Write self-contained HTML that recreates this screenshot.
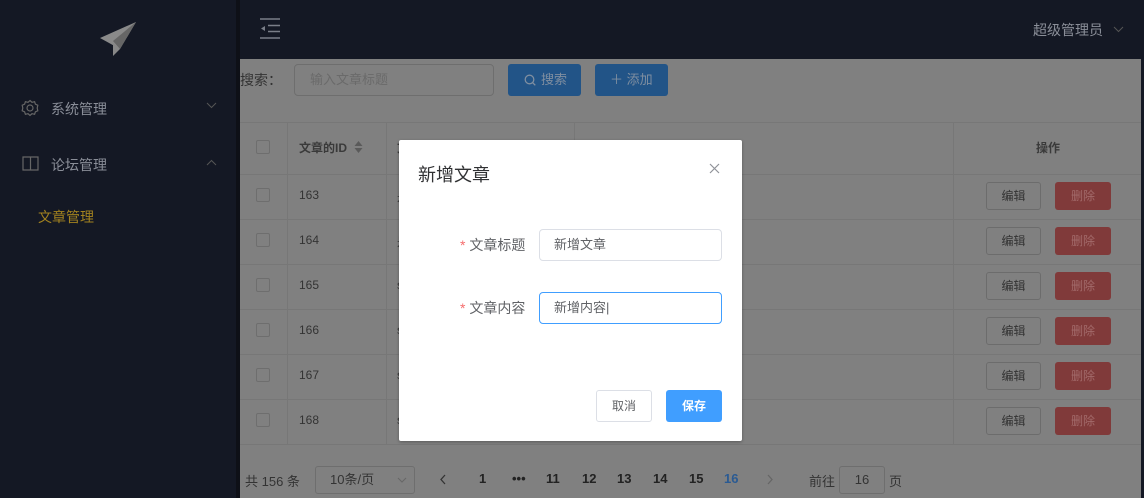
<!DOCTYPE html>
<html><head><meta charset="utf-8"><style>
*{margin:0;padding:0;box-sizing:border-box}
body{width:1144px;height:498px;overflow:hidden;background:#808080;font-family:"Liberation Sans","Noto Sans CJK SC",sans-serif;font-size:13px;position:relative}
.a{position:absolute}
.side{left:0;top:0;width:240px;height:498px;background:#141824;border-right:4px solid #0e1017}
.hdr{left:240px;top:0;width:904px;height:59px;background:#141824}
.t{position:absolute;white-space:nowrap}
.hl{background:#777;position:absolute}
.cb{position:absolute;width:14px;height:14px;border:1px solid #6e6e6e;border-radius:2px;left:256px}
.ed{position:absolute;left:986px;width:55px;height:28px;border:1px solid #6c6c6c;border-radius:3px;color:#333;text-align:center;line-height:26px;font-size:12px}
.de{position:absolute;left:1055px;width:56px;height:28px;background:#803a3a;border-radius:3px;color:#a26a6a;text-align:center;line-height:28px;font-size:12px}
.dlg{left:399px;top:140px;width:343px;height:301px;background:#fff;border-radius:2px;box-shadow:0 1px 3px rgba(0,0,0,.3)}
.inp{position:absolute;border:1px solid #dcdfe6;border-radius:4px;height:32px;width:183px;left:140px;padding-left:14px;line-height:30px;color:#606266;font-size:13px}
.pg{position:absolute;top:471px;font-size:13px;font-weight:bold;color:#222}
</style></head><body>
<div class="a side">
<svg class="a" style="left:98px;top:21px" width="40" height="36" viewBox="0 0 40 36"><polygon points="2,17 38,1 22,28" fill="#8a8a8a"/><polygon points="38,1 22,28 15,20" fill="#666"/><polygon points="15,22 22,28 15,35" fill="#888"/></svg>
<svg class="a" style="left:21px;top:99px" width="18" height="18" viewBox="0 0 18 18"><circle cx="9" cy="9" r="3" fill="none" stroke="#666" stroke-width="1.2"/><path d="M9 1.5l2 1.8 2.6-.6.8 2.5 2.4 1-.6 2.8.6 2.8-2.4 1-.8 2.5-2.6-.6-2 1.8-2-1.8-2.6.6-.8-2.5-2.4-1 .6-2.8-.6-2.8 2.4-1 .8-2.5 2.6.6z" fill="none" stroke="#666" stroke-width="1.2"/></svg>
<div class="t" style="left:51px;top:99px;color:#8a8e98;font-size:14px">系统管理</div>
<svg class="a" style="left:206px;top:102px" width="11" height="7"><path d="M1 1l4.5 4.5L10 1" fill="none" stroke="#555" stroke-width="1"/></svg>
<svg class="a" style="left:22px;top:156px" width="17" height="15"><path d="M1 1h15v13H1zM8.5 1v13" fill="none" stroke="#666" stroke-width="1.2"/></svg>
<div class="t" style="left:51px;top:155px;color:#8a8e98;font-size:14px">论坛管理</div>
<svg class="a" style="left:206px;top:159px" width="11" height="7"><path d="M1 6l4.5-4.5L10 6" fill="none" stroke="#555" stroke-width="1"/></svg>
<div class="t" style="left:38px;top:207px;color:#a2821f;font-size:14px">文章管理</div>
</div>
<div class="a hdr">
<svg class="a" style="left:20px;top:18px" width="20" height="21"><path d="M0 1h20M8 7.5h12M8 13.5h12M0 20h20" stroke="#7a7e88" stroke-width="1.5"/><polygon points="1,10.5 5,8 5,13" fill="#7a7e88"/></svg>
<div class="t" style="left:793px;top:20px;color:#8a8e98;font-size:14px">超级管理员</div>
<svg class="a" style="left:873px;top:26px" width="11" height="7"><path d="M1 1l4.5 4.5L10 1" fill="none" stroke="#555" stroke-width="1"/></svg>
</div>
<div class="t" style="left:240px;top:70px;color:#333;font-size:14px">搜索：</div>
<div class="a" style="left:294px;top:64px;width:200px;height:32px;border:1px solid #6e6e6e;border-radius:4px;color:#6a6a6a;line-height:30px;padding-left:15px">输入文章标题</div>
<div class="a" style="left:508px;top:64px;width:73px;height:32px;background:#225487;border-radius:3px;color:#7f8ea0;line-height:32px;padding-left:33px">搜索</div>
<svg class="a" style="left:524px;top:74px" width="12" height="12"><circle cx="5.5" cy="5.5" r="4.3" fill="none" stroke="#7f8ea0" stroke-width="1.3"/><path d="M8.5 8.5l2.8 2.8" stroke="#7f8ea0" stroke-width="1.3"/></svg>
<div class="a" style="left:595px;top:64px;width:73px;height:32px;background:#225487;border-radius:3px;color:#7f8ea0;line-height:32px;padding-left:15px">＋ 添加</div>
<div class="hl" style="left:240px;top:122px;width:904px;height:1px"></div>
<div class="hl" style="left:240px;top:174px;width:904px;height:1px"></div>
<div class="hl" style="left:240px;top:219px;width:904px;height:1px"></div>
<div class="hl" style="left:240px;top:264px;width:904px;height:1px"></div>
<div class="hl" style="left:240px;top:309px;width:904px;height:1px"></div>
<div class="hl" style="left:240px;top:354px;width:904px;height:1px"></div>
<div class="hl" style="left:240px;top:399px;width:904px;height:1px"></div>
<div class="hl" style="left:240px;top:444px;width:904px;height:1px"></div>
<div class="hl" style="left:287px;top:122px;width:1px;height:322px"></div>
<div class="hl" style="left:386px;top:122px;width:1px;height:322px"></div>
<div class="hl" style="left:574px;top:122px;width:1px;height:52px"></div>
<div class="hl" style="left:953px;top:122px;width:1px;height:322px"></div>
<div class="cb" style="top:140px"></div>
<div class="t" style="left:299px;top:139px;color:#3a3a3a;font-weight:bold;font-size:12px">文章的ID</div>
<svg class="a" style="left:354px;top:140px" width="9" height="14"><polygon points="4.5,1 8.5,6 0.5,6" fill="#5a5a5a"/><polygon points="4.5,13 8.5,8 0.5,8" fill="#5a5a5a"/></svg>
<div class="t" style="left:397px;top:139px;color:#3a3a3a;font-weight:bold;font-size:12px">文</div>
<div class="t" style="left:1036px;top:139px;color:#3a3a3a;font-weight:bold;font-size:12px">操作</div>
<div class="cb" style="top:188px"></div><div class="t" style="left:299px;top:188px;color:#333;font-size:12px">163</div><div class="t" style="left:397px;top:188px;color:#333;font-size:12px">是</div><div class="ed" style="top:182px">编辑</div><div class="de" style="top:182px">删除</div>
<div class="cb" style="top:233px"></div><div class="t" style="left:299px;top:233px;color:#333;font-size:12px">164</div><div class="t" style="left:397px;top:233px;color:#333;font-size:12px">是</div><div class="ed" style="top:227px">编辑</div><div class="de" style="top:227px">删除</div>
<div class="cb" style="top:278px"></div><div class="t" style="left:299px;top:278px;color:#333;font-size:12px">165</div><div class="t" style="left:397px;top:278px;color:#333;font-size:12px">s</div><div class="ed" style="top:272px">编辑</div><div class="de" style="top:272px">删除</div>
<div class="cb" style="top:323px"></div><div class="t" style="left:299px;top:323px;color:#333;font-size:12px">166</div><div class="t" style="left:397px;top:323px;color:#333;font-size:12px">s</div><div class="ed" style="top:317px">编辑</div><div class="de" style="top:317px">删除</div>
<div class="cb" style="top:368px"></div><div class="t" style="left:299px;top:368px;color:#333;font-size:12px">167</div><div class="t" style="left:397px;top:368px;color:#333;font-size:12px">s</div><div class="ed" style="top:362px">编辑</div><div class="de" style="top:362px">删除</div>
<div class="cb" style="top:413px"></div><div class="t" style="left:299px;top:413px;color:#333;font-size:12px">168</div><div class="t" style="left:397px;top:413px;color:#333;font-size:12px">s</div><div class="ed" style="top:407px">编辑</div><div class="de" style="top:407px">删除</div>
<div class="t" style="left:245px;top:471px;color:#333;font-size:13px">共 156 条</div>
<div class="a" style="left:315px;top:466px;width:100px;height:28px;border:1px solid #6e6e6e;border-radius:3px;color:#333;line-height:26px;padding-left:14px">10条/页</div>
<svg class="a" style="left:397px;top:477px" width="10" height="6"><path d="M1 1l4 4 4-4" fill="none" stroke="#666" stroke-width="1"/></svg>
<svg class="a" style="left:440px;top:474px" width="6" height="11"><path d="M5 1L1 5.5 5 10" fill="none" stroke="#333" stroke-width="1.3"/></svg>
<div class="pg" style="left:479px">1</div>
<div class="pg" style="left:512px">•••</div>
<div class="pg" style="left:546px">11</div>
<div class="pg" style="left:582px">12</div>
<div class="pg" style="left:617px">13</div>
<div class="pg" style="left:653px">14</div>
<div class="pg" style="left:689px">15</div>
<div class="pg" style="left:724px;color:#2a5a92">16</div>
<svg class="a" style="left:767px;top:474px" width="6" height="11"><path d="M1 1l4 4.5L1 10" fill="none" stroke="#666" stroke-width="1.3"/></svg>
<div class="t" style="left:809px;top:471px;color:#333">前往</div>
<div class="a" style="left:839px;top:466px;width:46px;height:28px;border:1px solid #6e6e6e;border-radius:3px;color:#333;line-height:26px;text-align:center">16</div>
<div class="t" style="left:889px;top:471px;color:#333">页</div>
<div class="a" style="left:1141px;top:0;width:3px;height:498px;background:#141824"></div>
<div class="a dlg">
<div class="t" style="left:19px;top:21px;font-size:18px;color:#303133">新增文章</div>
<svg class="a" style="left:310px;top:23px" width="11" height="11"><path d="M1 1l9 9M10 1l-9 9" stroke="#909399" stroke-width="1.2"/></svg>
<div class="t" style="left:61px;top:95px;font-size:14px;color:#606266"><span style="color:#f56c6c">*</span> 文章标题</div>
<div class="inp" style="top:89px">新增文章</div>
<div class="t" style="left:61px;top:158px;font-size:14px;color:#606266"><span style="color:#f56c6c">*</span> 文章内容</div>
<div class="inp" style="top:152px;border-color:#409eff">新增内容|</div>
<div class="a" style="left:197px;top:250px;width:56px;height:32px;border:1px solid #dcdfe6;border-radius:3px;color:#606266;text-align:center;line-height:30px;font-size:12px">取消</div>
<div class="a" style="left:267px;top:250px;width:56px;height:32px;background:#409eff;border-radius:3px;color:#fff;text-align:center;line-height:32px;font-size:12px;font-weight:bold">保存</div>
</div>
</body></html>
